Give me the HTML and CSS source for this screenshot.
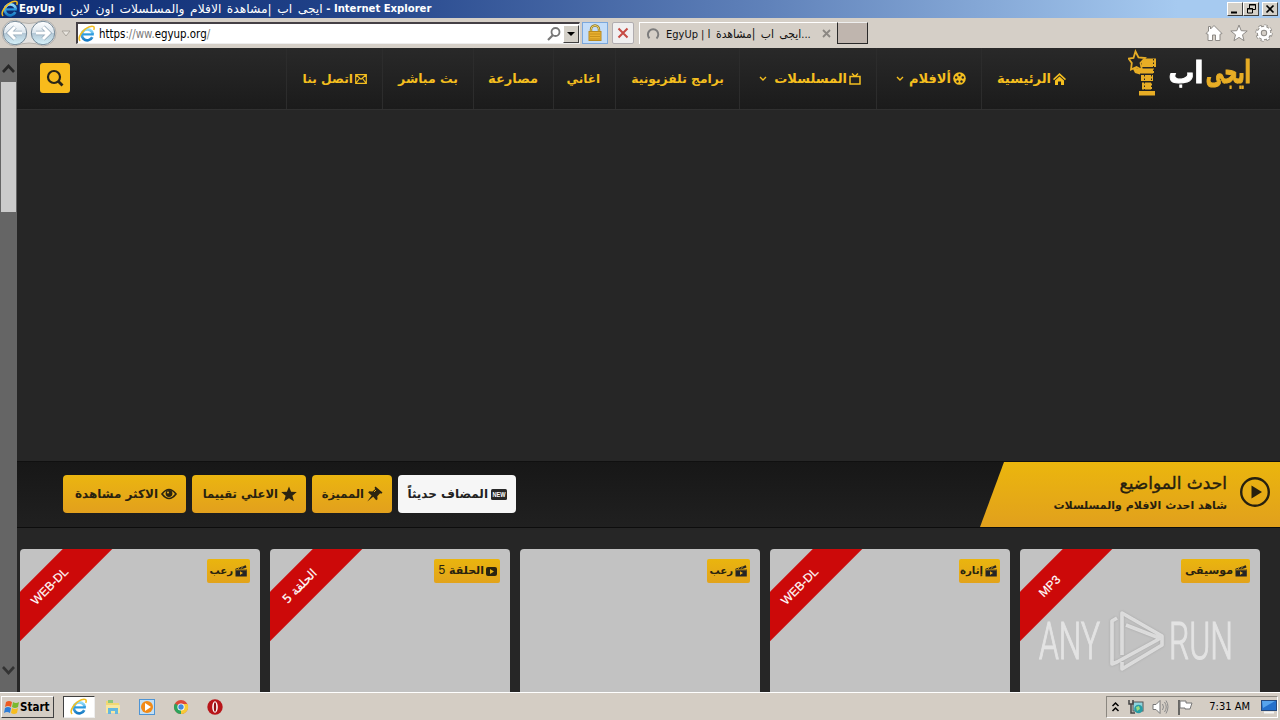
FILE: index.html
```html
<!DOCTYPE html>
<html lang="ar">
<head>
<meta charset="utf-8">
<title>EgyUp</title>
<link rel="stylesheet" href="styles.css">
</head>
<body>
<svg width="0" height="0" class="defs">
  <defs>
    <linearGradient id="sky" x1="0" y1="0" x2="0" y2="1"><stop offset="0" stop-color="#8fdcfb"/><stop offset="1" stop-color="#1479c4"/></linearGradient>
    <linearGradient id="glass" x1="0" y1="0" x2="0" y2="1"><stop offset="0" stop-color="#fff"/><stop offset=".48" stop-color="#dce6ee"/><stop offset=".52" stop-color="#b4c8d6"/><stop offset="1" stop-color="#d5f2fb"/></linearGradient>
    <symbol id="ie" viewBox="0 0 18 18"><path d="M14.3 12.2a5.500 5.500 0 1 1 .5-3" fill="none" stroke="url(#sky)" stroke-width="2.700"/><path d="M4.300 9.400h11.500" stroke="#2b9adf" stroke-width="2.200"/><path d="M2.200 15.800C-1.500 13.500 5 4 11.500 1.700c4-1.500 5.500.3 4.200 3.200" fill="none" stroke="#f2bd20" stroke-width="1.500"/></symbol>
    <symbol id="clap" viewBox="0 0 12 12"><path d="M.5 3.800 10.800.3l.7 2.200-5 1.800h5.300v7.200H.5z" fill="#252525"/><path d="m2.500 4.500 2-2M6 3.800l2-2.500M1 4.800h10.500" stroke="#e8ab15" stroke-width=".8"/><path d="m5 6.300 3 1.800-3 1.800z" fill="#e8ab15"/></symbol>
  </defs>
</svg>
<div class="titlebar">
  <svg class="ico18"><use href="#ie"/></svg>
  <div class="title" dir="ltr"><b>EgyUp | </b><span class="ttl-ar" dir="rtl">ايجى اب |مشاهدة الافلام والمسلسلات اون لاين</span><b> - Internet Explorer</b></div>
  <div class="winbtns">
    <i class="wb"><svg width="15" height="13"><path d="M3 9.500h6" stroke="#000" stroke-width="2"/></svg></i><i class="wb"><svg width="15" height="13"><path d="M5.500 5V1.500h6v5H9M5 2h7M3.500 5.500h5v4.500h-5zM3 6h6" fill="none" stroke="#000"/></svg></i><i class="wb close"><svg width="15" height="13"><path d="m3.500 2.500 7 7m0-7-7 7" stroke="#000" stroke-width="1.700"/></svg></i>
  </div>
</div>
<div class="toolbar">
  <svg class="backfwd" width="74" height="30" viewBox="0 0 74 30"><path d="M15 2Q29 9 43 2a13 13 0 0 1 0 26Q29 22 15 28a13 13 0 0 1 0-26" fill="#e4e3e1" stroke="#b5b1ac"/><circle cx="15" cy="15" r="11.700" fill="url(#glass)" stroke="#758998"/><circle cx="43" cy="15" r="11.700" fill="url(#glass)" stroke="#758998"/><path d="M22 15H10m5-6-6 6 6 6M36 15h12m-5-6 6 6-6 6" fill="none" stroke="#94a8b8" stroke-width="4.500"/><path d="M22 15H10m5-6-6 6 6 6M36 15h12m-5-6 6 6-6 6" fill="none" stroke="#fff" stroke-width="3"/><path d="M62 13h8l-4 5z" fill="#e9e5df" stroke="#aaa59d"/></svg>
  <div class="address"><svg class="ico18"><use href="#ie"/></svg><span class="url">https<em>://ww.</em>egyup.org<em>/</em></span>
    <svg class="find" width="16" height="16"><circle cx="9.500" cy="6" r="4" fill="none" stroke="#777" stroke-width="1.800"/><path d="m7 9-5 5" stroke="#777" stroke-width="2.200"/></svg>
    <i class="drop"><svg width="12" height="12"><path d="M2 4h8L6 8z"/></svg></i>
  </div>
  <i class="lock"><svg width="16" height="18"><path d="M4 8V5.500a4 4 0 0 1 8 0V8" fill="none" stroke="#92751d" stroke-width="2.400"/><path d="M4 8V5.500a4 4 0 0 1 8 0V8" fill="none" stroke="#efd66f"/><rect x="2" y="7.500" width="12" height="9" fill="#e8b030" stroke="#b88a20"/><path d="M3 10h10M3 12.500h10M3 15h10" stroke="#c08a18" stroke-width=".8"/></svg></i>
  <i class="stop"><svg width="12" height="12"><path d="m1.500 1.500 9 9m0-9-9 9" stroke="#c64a43" stroke-width="2"/></svg></i>
  <div class="tab"><svg width="14" height="14"><path d="M3.500 11.200a5.200 5.200 0 1 1 7 .2" fill="none" stroke="#7c7c7c" stroke-width="2"/></svg><span class="tab-txt" dir="ltr">EgyUp | <bdo dir="ltr"><span class="tab-ar" dir="rtl">ايجى اب |مشاهدة ا</span></bdo>...</span><svg class="tabx" width="9" height="9"><path d="m1 1 7 7m0-7-7 7" stroke="#8b8782" stroke-width="1.800"/></svg></div>
  <i class="newtab"></i>
  <div class="tools">
    <svg width="18" height="18"><path d="m1 9.500 2 .8V16.500h4.500V11h3v5.500H15v-6.200l2-.8L9 1.500 5.500 5V2.500h-2V7z" fill="#fff" stroke="#8d8a86"/></svg>
    <svg width="18" height="18"><path d="m9 1 2.200 5.700 6 .3-4.700 3.800L14 16.700 9 13.400l-5 3.300 1.500-5.900L.8 7l6-.3z" fill="#fff" stroke="#8d8a86"/></svg>
    <svg width="18" height="18"><circle cx="9" cy="9" r="6.800" fill="none" stroke="#8d8a86" stroke-width="3.600" stroke-dasharray="3 2.340"/><circle cx="9" cy="9" r="4.700" fill="none" stroke="#8d8a86" stroke-width="5"/><circle cx="9" cy="9" r="6.600" fill="none" stroke="#fff" stroke-width="2.600" stroke-dasharray="2.200 2.980"/><circle cx="9" cy="9" r="4.700" fill="none" stroke="#fff" stroke-width="3"/></svg>
  </div>
</div>
<div class="view">
  <div class="scroll"><svg class="up" width="17" height="34"><path d="m3 24 5.500-6 5.500 6" fill="none" stroke="#272727" stroke-width="2.600"/></svg><div class="thumb"></div><svg class="down" width="17" height="34"><path d="m3 9 5.500 6L14 9" fill="none" stroke="#333" stroke-width="2.600"/></svg></div>
  <div class="page" dir="rtl">
    <header class="head">
      <div class="brand"><span class="lt l1"><span>ايجى</span></span><span class="lt l2"><span>اب</span></span>
      <svg width="30" height="50"><path d="M14 10.500h14V19H14zM12 20.500h14v5H12zM13 27h12v6H13zM14 34.500h10v7H14zM11 43h16v4.500H11z" fill="#e7ad25"/><path d="m4 19 3 6 5 1.500V21z" fill="#e7ad25"/><path d="m7.500 3.500 3 6 6.500.5-4.500 5 1.500 7-5.500-3-5.500 2.500.8-6.500-3.300-4.500 5-.5z" fill="#252525" stroke="#e7ad25" stroke-width="1.800"/><path d="M25.500 11v16M23.500 27v15M16.500 27v16" stroke="#252525" stroke-width="1" stroke-dasharray="1.500 2"/></svg></div>
      <nav class="nav">
        <a class="n w100"><svg width="13" height="12"><path d="M6.500 0 0 6l1 1.200L6.500 2.200 12 7.200 13 6zM2 7.500 6.500 3.500 11 7.500V12H8V8.500H5V12H2z" fill="#f4be1f"/></svg><span>الرئيسية</span></a>
        <a class="n w105"><svg width="13" height="13"><circle cx="6.500" cy="6.500" r="6.300" fill="#f4be1f"/><g fill="#222"><circle cx="6.500" cy="3" r="1.200"/><circle cx="3.200" cy="5.500" r="1.200"/><circle cx="9.800" cy="5.500" r="1.200"/><circle cx="4.500" cy="9.500" r="1.200"/><circle cx="8.500" cy="9.500" r="1.200"/></g></svg><span>ألافلام</span><svg class="chev" width="8" height="6"><path d="m1 1 3 3 3-3" fill="none" stroke="#f4be1f" stroke-width="1.400"/></svg></a>
        <a class="n w137"><svg width="12" height="12"><path d="M1 3.500h10v7.500H1zM3 .5 6 3.500 9 .5" fill="none" stroke="#f4be1f" stroke-width="1.500"/></svg><span>المسلسلات</span><svg class="chev" width="8" height="6"><path d="m1 1 3 3 3-3" fill="none" stroke="#f4be1f" stroke-width="1.400"/></svg></a>
        <a class="n w124"><span class="s1">برامج تلفزيونية</span></a>
        <a class="n w62"><span class="s2">اغاني</span></a>
        <a class="n w80"><span>مصارعة</span></a>
        <a class="n w91"><span class="s3">بث مباشر</span></a>
        <a class="n w96"><svg width="12" height="10"><path d="M.7.700h10.600v8.600H.7zM1 1l5 4.300L11 1M1 9l3.500-4.500M11 9 7.500 4.500" fill="none" stroke="#f4be1f" stroke-width="1.200"/></svg><span class="s1">اتصل بنا</span></a>
      </nav>
      <div class="search"><svg width="18" height="18"><circle cx="8" cy="8" r="6" fill="none" stroke="#292519" stroke-width="2.200"/><path d="m12 12 4.500 4.500" stroke="#292519" stroke-width="2.800"/></svg></div>
    </header>
    <div class="hero"></div>
    <div class="bar">
      <div class="ribbon"><svg width="30" height="30"><circle cx="15" cy="15" r="13.800" fill="none" stroke="#26200f" stroke-width="2.400"/><path d="M11.500 8.500 22 15l-10.500 6.500z" fill="#26200f"/></svg><div class="rt"><div class="r1"><span>احدث المواضيع</span></div><div class="r2"><span>شاهد احدث الافلام والمسلسلات</span></div></div></div>
      <div class="tabs">
        <a class="b white b1"><svg width="16" height="11"><rect width="16" height="11" rx="1.500" fill="#282828"/><text x="1.500" y="8.300" class="new" textLength="13" lengthAdjust="spacingAndGlyphs" direction="ltr">NEW</text></svg><span>المضاف حديثاً</span></a>
        <a class="b b2"><svg width="16" height="16"><path d="m8.500.5 7 6-1.200 1.300-1.200-.5-2.800 3 .2 3-1.300 1-3-3.500L.3 15.500 4.600 9.500 1.200 6.500l1-1.200 3.300.2L8.300 3 7.500 1.700z" fill="#2b2410"/><path d="m7 6 2-2" stroke="#e8ab15"/></svg><span>المميزة</span></a>
        <a class="b b3"><svg width="16" height="16"><path d="m8 .5 2.100 5.300 5.700.3-4.400 3.600 1.500 5.600L8 12.200l-4.900 3.100 1.500-5.600L.2 6.100l5.700-.3z" fill="#2b2410"/></svg><span>الاعلي تقييما</span></a>
        <a class="b b4"><svg width="16" height="12"><path d="M1 6q7-9 14 0-7 9-14 0z" fill="none" stroke="#2b2410" stroke-width="1.700"/><circle cx="8" cy="5.500" r="3.400" fill="#2b2410"/><circle cx="7" cy="4.500" r="1" fill="#e5ad20"/></svg><span>الاكثر مشاهدة</span></a>
      </div>
    </div>
    <div class="cards">
      <div class="card"><div class="rib"><span>MP3</span></div><div class="tag g69"><svg width="12" height="12"><use href="#clap"/></svg><span>موسيقى</span></div></div>
      <div class="card"><div class="rib"><span>WEB-DL</span></div><div class="tag g41"><svg width="12" height="12"><use href="#clap"/></svg><span class="t2">إثارة</span></div></div>
      <div class="card"><div class="tag g43"><svg width="12" height="12"><use href="#clap"/></svg><span class="t2">رعب</span></div></div>
      <div class="card"><div class="rib"><span class="ar">الحلقة 5</span></div><div class="tag g66"><svg width="11" height="9"><rect width="11" height="9" rx="2" fill="#2b2410"/><path d="m4 2 4 2.500L4 7z" fill="#e8b315"/></svg><span>الحلقة <span class="num">5</span></span></div></div>
      <div class="card"><div class="rib"><span>WEB-DL</span></div><div class="tag g43"><svg width="12" height="12"><use href="#clap"/></svg><span class="t2">رعب</span></div></div>
    </div>
  </div>
  <svg class="mark" width="204" height="68" viewBox="0 0 204 68"><g class="mt"><text x="6" y="52.500" textLength="61" lengthAdjust="spacingAndGlyphs">ANY</text><text x="136" y="52.500" textLength="64" lengthAdjust="spacingAndGlyphs">RUN</text></g><path class="tri" d="M89 49V7l40 23v3L93 19M84 12l-5 3v43l5-2 42-23M89 56v7l40-24v-6" /></svg>
</div>
<div class="taskbar">
  <div class="start"><svg width="16" height="16"><path d="M2 3q3-2 6 0L7 8Q4 6 1 8z" fill="#ed5b22"/><path d="M9 3q3 2 6 0l-1 5q-3 2-6 0z" fill="#7ab92f"/><path d="M1 9q3-2 6 0l-1 5q-3-2-6 0z" fill="#2d7dd8"/><path d="M8 9q3 2 6 0l-1 5q-3 2-6 0z" fill="#f7bd1f"/></svg><b>Start</b></div>
  <div class="active"><svg class="ico18"><use href="#ie"/></svg></div>
  <svg width="16" height="16"><path d="M1 2h5l1 2h7v10H1z" fill="#f1d873"/><path d="M3 1h5v3H3z" fill="#8dc77b"/><path d="M1 6h14v8H1z" fill="#f7e7a0"/><path d="M3 15V9h10v6h-3v-3H6v3z" fill="#65b8df"/></svg>
  <svg width="16" height="16"><rect x=".5" y=".5" width="15" height="15" fill="#c3dff4" stroke="#4e94d4"/><circle cx="8" cy="8" r="6" fill="#f28a16"/><path d="m6 4 6 4-6 4z" fill="#fff"/></svg>
  <svg width="16" height="16"><circle cx="8" cy="8" r="7" fill="#dc4938"/><path d="M8 8 2 4.400A7 7 0 0 0 8 15l3-5z" fill="#2da35c"/><path d="M8 8h0L8 15A7 7 0 0 0 14.500 5H8z" fill="#f7ca36"/><circle cx="8" cy="8" r="3.600" fill="#fff"/><circle cx="8" cy="8" r="2.700" fill="#4189dc"/></svg>
  <svg width="16" height="16"><circle cx="8" cy="8" r="7.700" fill="#b81519"/><ellipse cx="8" cy="8" rx="2.800" ry="5.800" fill="#fff"/><ellipse cx="8" cy="8" rx="1.200" ry="4.800" fill="#931013"/></svg>
  <div class="tray">
    <svg width="9" height="12"><path d="m1.500 5 3-3 3 3m-6 5 3-3 3 3" fill="none" stroke="#000" stroke-width="1.500"/></svg>
    <svg width="16" height="16"><rect x="5" y="3" width="10" height="9" fill="#8fd5df" stroke="#555"/><path d="M1 1v4h4V1M3 5v9h4" fill="none" stroke="#444" stroke-width="1.500"/><circle cx="10.500" cy="10" r="4.300" fill="#289da5"/><path d="m8 8 3-1 1 3-3 2z" fill="#9adc81"/></svg>
    <svg width="17" height="16"><path d="M1 5.500h3l4-4v13l-4-4H1z" fill="#fff" stroke="#777"/><path d="M10.500 5q2 3 0 6M12.500 3q3.500 5 0 10M14 1.500q4 6 0 13" fill="none" stroke="#8b8b8b"/></svg>
    <svg width="17" height="16"><path d="M2 1v15" stroke="#444" stroke-width="1.500"/><path d="M3 2h6v2h6l-2 6H8V9H3z" fill="#fff" stroke="#777"/></svg>
    <span class="clock">7:31 AM</span>
    <svg width="16" height="14"><rect x=".5" y=".5" width="15" height="10" fill="#2470cb" stroke="#26497c"/><path d="M1 1h13L2 8z" fill="#57a4ec"/><path d="M3 12.500h10" stroke="#f5f5f5" stroke-width="2"/></svg>
  </div>
</div>
</body>
</html>
```
FILE: styles.css
```css
* { box-sizing: border-box; }
body { margin: 0; width: 1280px; height: 720px; overflow: hidden; display: flex; flex-direction: column; background: #262626; font-family: "DejaVu Sans", sans-serif; }
svg { flex: none; display: block; }
i, em { font-style: normal; }
.defs { position: absolute; }
.ico18 { width: 18px; height: 18px; }

.titlebar { height: 18px; flex: none; display: flex; align-items: center; background: linear-gradient(90deg, #0e2c72 0, #1f4087 25%, #6082ba 60%, #a6caf0 92%); color: #fff; font-size: 11px; padding-left: 1px; }
.title { display: flex; white-space: pre; line-height: 18px; }
.title b { font-family: "DejaVu Sans Condensed", "DejaVu Sans"; font-stretch: condensed; font-size: 11.2px; }
.ttl-ar { width: 257px; font-size: 12.300px; word-spacing: 1.600px; padding-left: 2px; }
.winbtns { margin-left: auto; display: flex; padding-right: 2px; }
.wb { width: 16px; height: 14px; background: #d4d0c8; border: 1px solid; border-color: #fff #404040 #404040 #fff; }
.close { margin-left: 3px; }

.toolbar { height: 30px; flex: none; display: flex; align-items: center; background: #d5cfc7; }
.backfwd { margin-right: 2px; }
.address { width: 504px; height: 22px; background: #fff; border: 1px solid; border-top: 2px solid #454045; border-left: 2px solid #454045; border-color: #454045 #eee #eee #454045; display: flex; align-items: center; font-size: 11.400px; color: #000; }
.url { margin-left: 3px; font-stretch: condensed; }
.url em { color: #7a7a7a; }
.find { margin-left: auto; }
.drop { width: 16px; height: 18px; margin-left: 1px; background: #d4d0c8; border: 1px solid; border-color: #fff #404040 #404040 #fff; display: grid; place-items: center; }
.lock { width: 26px; height: 22px; margin-left: 2px; background: #c4ddf8; border: 1px solid #7ca8dc; display: grid; place-items: center; }
.stop { width: 22px; height: 22px; margin-left: 4px; background: #f0eff0; border: 1px solid #b1adb0; border-radius: 2px; display: grid; place-items: center; }
.tab { width: 198px; height: 22px; margin-left: 5px; border-left: 1px solid #fff; border-top: 1px solid #fff; display: flex; align-items: center; padding: 0 6px; font-size: 11px; color: #111; white-space: nowrap; }
.tab-txt { margin-left: 6px; width: 150px; font-stretch: condensed; }
.tab-ar { font-size: 12px; word-spacing: 2px; }
.tabx { margin-left: auto; }
.newtab { width: 31px; height: 22px; background: #bfb5ae; border: 1px solid #292929; border-top-color: #eee; }
.tools { margin-left: auto; display: flex; gap: 7px; padding-right: 7px; }

.view { position: relative; height: 644px; flex: none; display: flex; overflow: hidden; }
.scroll { width: 17px; height: 644px; background: #656565; display: flex; flex-direction: column; }
.thumb { height: 130px; width: 15px; margin-left: 1px; background: #cbcbcb; flex: none; }
.down { margin-top: auto; }
.page { width: 1263px; color: #f4be1f; }
.head { height: 62px; display: flex; background: linear-gradient(#292929, #1b1b1b); border-bottom: 1px solid #303030; padding-right: 28px; }
.brand { width: 124px; height: 61px; margin-left: 47px; display: flex; justify-content: space-between; }
.lt { height: 50px; font: bold 28px/50px "DejaVu Sans"; color: #e7ad25; -webkit-text-stroke: 1px; white-space: nowrap; display: flex; justify-content: center; }
.lt span { transform: scale(.66, 1.150); }
.l1 { width: 47px; }
.l2 { width: 38px; color: #fff; margin-left: 8px; }
.l2 span { transform: scale(.92, 1.100); }
.nav { display: flex; }
.n { height: 61px; border-left: 1px solid #2c2c2c; display: flex; align-items: center; justify-content: flex-start; padding: 0 15px; gap: 2px; font-size: 13px; font-weight: bold; white-space: nowrap; }
.s1 { font-size: 12.300px; } .s2 { font-size: 12px; } .s3 { font-size: 12.500px; }
.chev { margin-right: auto; margin-left: 4px; }
.w100 { width: 100px; } .w105 { width: 105px; } .w137 { width: 137px; } .w124 { width: 124px; } .w62 { width: 62px; } .w80 { width: 80px; } .w91 { width: 91px; } .w96 { width: 96px; }
.search { width: 30px; height: 30px; margin: 15px auto 0 23px; border-radius: 3px; background: #f8bb1c; display: grid; place-items: center; }
.hero { height: 351px; background: #262626; }
.bar { height: 67px; background: linear-gradient(#171717, #202020); border-top: 1px solid #101010; border-bottom: 1px solid #0d0d0d; display: flex; justify-content: space-between; }
.ribbon { width: 300px; height: 65px; background: linear-gradient(#ebb60d, #e1a01d); clip-path: polygon(24px 0, 100% 0, 100% 100%, 0 100%); color: #26200f; display: flex; padding: 15px 10px 0; gap: 13px; }
.rt { white-space: nowrap; margin-top: -4px; }
.r1 { font-size: 17px; line-height: 20px; margin-bottom: 3px; -webkit-text-stroke: .4px; }
.r2 { font-size: 11px; line-height: 20px; font-weight: bold; }
.tabs { display: flex; gap: 6px; padding: 13px 0 0 46px; }
.b { height: 38px; border-radius: 4px; background: linear-gradient(#ebb510, #e2a01d); color: #29220f; display: flex; align-items: center; gap: 3px; padding: 0 9px; font-size: 12px; font-weight: bold; white-space: nowrap; }
.white { background: #f6f6f6; color: #222; }
.b1 { width: 118px; } .b2 { width: 80px; font-size: 11.500px; } .b3 { width: 114px; font-size: 11.600px; } .b4 { width: 123px; }
.new { font: bold 6.500px "Liberation Sans"; fill: #fff; }
.cards { display: flex; gap: 10px; padding: 21px 20px 0 0; }
.card { width: 240px; height: 160px; flex: none; border-radius: 4px 4px 0 0; background: #c2c2c2; overflow: hidden; position: relative; padding: 10px; }
.tag { height: 24px; border-radius: 2px; background: linear-gradient(#eab50e, #e2a31b); color: #29220f; display: flex; align-items: center; gap: 2px; padding: 0 3px 2px; font-size: 11px; font-weight: bold; white-space: nowrap; }
.tag svg { margin-top: 2px; }
.t2 { font-size: 10.200px; }
.num { font: 12px "Liberation Sans"; }
.g69 { width: 69px; } .g41 { width: 41px; } .g43 { width: 43px; } .g66 { width: 66px; }
.rib { position: absolute; left: -50px; top: 20px; width: 160px; height: 35px; transform: rotate(-45deg); background: #cc0909; color: #fff; text-align: center; font: 12px/35px "Liberation Sans"; -webkit-text-stroke: .2px; }
.ar { font: 12px/35px "DejaVu Sans"; }
.mark { position: absolute; left: 1033px; top: 558px; }
.mt { font: 300 52px Roboto; fill: #f1f1f1; stroke: #f1f1f1; stroke-width: 1.200; opacity: .7; }
.tri { fill: none; stroke: #f1f1f1; stroke-opacity: .7; stroke-width: 3.600; stroke-linejoin: round; filter: drop-shadow(0 0 1px #999); }

.taskbar { height: 28px; flex: none; background: #d4cdc4; border-top: 1px solid #fff; display: flex; align-items: center; gap: 18px; padding-left: 1px; }
.start { width: 53px; height: 22px; border: 1px solid; border-color: #fff #404040 #404040 #fff; display: flex; align-items: center; padding-left: 2px; font-size: 11.500px; font-stretch: condensed; }
.active { width: 32px; height: 22px; margin-left: -9px; margin-right: -8px; background: #fff; border: 1px solid; border-color: #404040 #eee #eee #404040; display: grid; place-items: center; }
.tray { width: 172px; height: 22px; margin-left: auto; margin-right: 2px; border: 1px solid; border-color: #8b8780 #fff #fff #8b8780; display: flex; align-items: center; gap: 8px; padding: 0 0 0 4px; }
.clock { font-size: 11px; font-stretch: condensed; margin-left: auto; margin-right: 3px; white-space: nowrap; }
```
